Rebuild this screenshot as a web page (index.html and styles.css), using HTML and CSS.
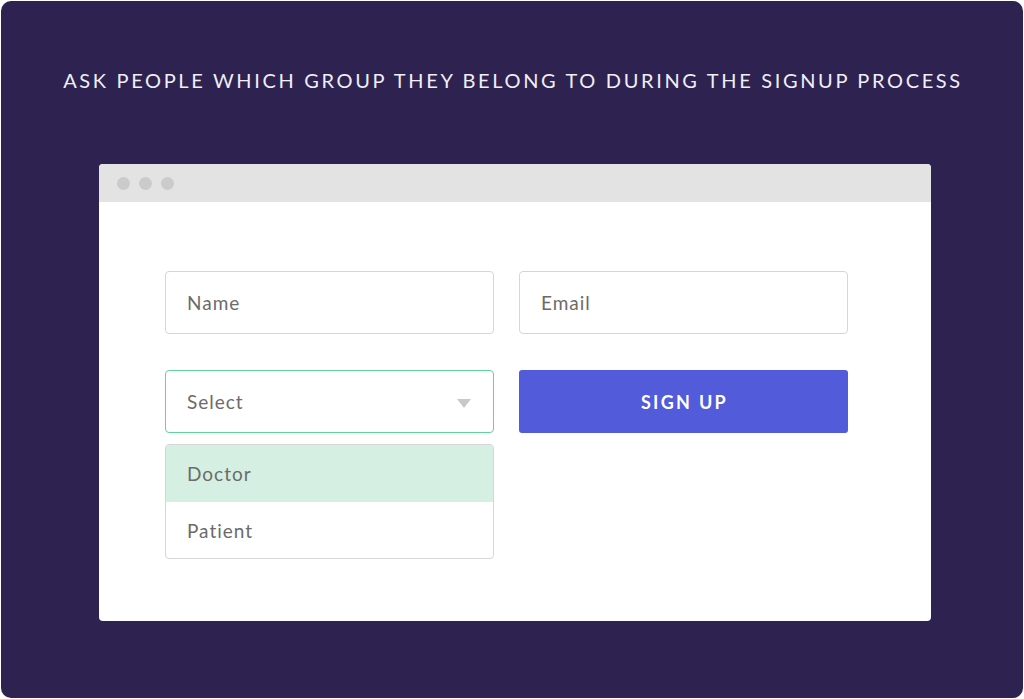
FILE: index.html
```html
<!DOCTYPE html>
<html>
<head>
<meta charset="utf-8">
<link rel="stylesheet" href="styles.css">
</head>
<body>
<div class="panel">
  <h1 class="title">ASK PEOPLE WHICH GROUP THEY BELONG TO DURING THE SIGNUP PROCESS</h1>
  <div class="window">
    <div class="bar">
      <span class="dot"></span><span class="dot"></span><span class="dot"></span>
    </div>
    <div class="body">
      <div class="form">
        <div class="field">Name</div>
        <div class="field">Email</div>
        <div class="col">
          <div class="field select">Select<span class="arrow"></span></div>
          <div class="menu">
            <div class="opt active">Doctor</div>
            <div class="opt">Patient</div>
          </div>
        </div>
        <div class="col">
          <div class="button">SIGN UP</div>
        </div>
      </div>
    </div>
  </div>
</div>
</body>
</html>
```
FILE: styles.css
```css
html, body { margin: 0; padding: 0; background: #ffffff; }
body { font-family: Lato, "Open Sans", sans-serif; }
.panel {
  margin: 1px;
  width: 1022px;
  height: 697px;
  box-sizing: border-box;
  background: #2e2250;
  border-radius: 10px;
  padding-top: 67px;
  overflow: hidden;
}
.title {
  margin: 0;
  text-align: center;
  color: #f0eef6;
  font-weight: 400;
  font-size: 20px;
  line-height: 24px;
  letter-spacing: 2.65px;
  padding-left: 2px;
}
.window {
  margin: 72px 0 0 98px;
  width: 832px;
  height: 457px;
  background: #ffffff;
  border-radius: 4px;
  overflow: hidden;
}
.bar {
  height: 38px;
  background: #e3e3e3;
  display: flex;
  align-items: center;
  gap: 9px;
  padding-left: 18px;
}
.dot { width: 13px; height: 13px; border-radius: 50%; background: #cbcbcb; }
.body { padding: 69px 0 0 66px; }
.form {
  display: grid;
  grid-template-columns: 329px 329px;
  column-gap: 25px;
  row-gap: 36px;
}
.col { display: flex; flex-direction: column; }
.field {
  height: 63px;
  box-sizing: border-box;
  border: 1.5px solid #d6d6d6;
  border-radius: 4px;
  display: flex;
  align-items: center;
  padding-left: 21px;
  font-size: 19px;
  color: #6b6b6b;
  letter-spacing: 1px;
}
.select { border-color: #62d39b; position: relative; }
.arrow {
  position: absolute;
  right: 22px;
  top: 28px;
  width: 0; height: 0;
  border-left: 7.5px solid transparent;
  border-right: 7.5px solid transparent;
  border-top: 9px solid #c9c9c9;
}
.menu {
  margin-top: 11px;
  border: 1.5px solid #d6d6d6;
  border-radius: 4px;
  overflow: hidden;
}
.opt {
  height: 56px;
  display: flex;
  align-items: center;
  padding-left: 21px;
  font-size: 19px;
  color: #6b6b6b;
  letter-spacing: 1px;
}
.opt.active { background: #d5f0e2; height: 57px; }
.button {
  height: 63px;
  background: #525bd9;
  border-radius: 3px;
  color: #ffffff;
  display: flex;
  align-items: center;
  justify-content: center;
  font-size: 18px;
  font-weight: 700;
  letter-spacing: 2.3px;
  padding-left: 2px;
}
```
